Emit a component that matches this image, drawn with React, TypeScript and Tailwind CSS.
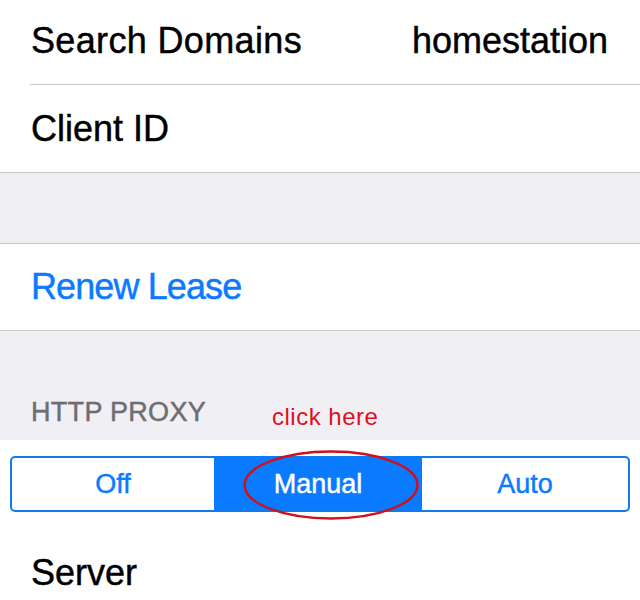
import React from "react";

export default function App() {
  const font = { fontFamily: '"Liberation Sans", Arial, sans-serif' };
  return (
    <div className="relative w-[640px] h-[600px] overflow-hidden bg-white [-webkit-text-stroke:0.45px]" style={font}>
      {/* Row 1 */}
      <div className="flex h-[84px] items-center justify-between pb-[3px] pl-[31px] pr-[32px] text-[36px] text-black">
        <span className="tracking-[0.35px]">Search Domains</span>
        <span>homestation</span>
      </div>
      <div className="ml-[30px] h-px bg-[#c8c7cc]" />
      {/* Row 2 */}
      <div className="flex h-[87px] items-center pl-[31px] text-[36px] text-black">
        <span>Client ID</span>
      </div>
      <div className="h-px bg-[#c8c7cc]" />
      <div className="h-[70px] bg-[#efeff4]" />
      <div className="h-px bg-[#c8c7cc]" />
      {/* Renew Lease */}
      <div className="flex h-[86px] items-center pl-[31px] text-[36px] text-[#0a7aff]">
        <span className="tracking-[-0.9px]">Renew Lease</span>
      </div>
      <div className="h-px bg-[#c8c7cc]" />
      {/* Section header */}
      <div className="flex h-[109px] items-end bg-[#efeff4] pb-[12px] pl-[31px]">
        <span className="text-[27px] leading-[32px] tracking-[0.3px] text-[#6d6d72]">HTTP PROXY</span>
      </div>
      {/* Segmented control */}
      <div className="pt-[16px] px-[10px]">
        <div className="grid h-[56px] grid-cols-[202px_208px_1fr] overflow-hidden rounded-[5px] border-2 border-[#1079ee] text-[27px]">
          <div className="flex items-center justify-center text-[#0a7aff]">Off</div>
          <div className="flex items-center justify-center bg-[#0a7aff] text-white">Manual</div>
          <div className="flex items-center justify-center text-[#0a7aff]">Auto</div>
        </div>
      </div>
      {/* Server */}
      <div className="mt-[17px] flex h-[87px] items-center pl-[31px] text-[36px] text-black">
        <span>Server</span>
      </div>

      {/* Annotation overlay */}
      <span className="absolute left-[272px] top-[402px] text-[24px] leading-[30px] tracking-[0.5px] text-[#e0101c] [-webkit-text-stroke:0px]">
        click here
      </span>
      <svg className="absolute left-0 top-0" width="640" height="600" viewBox="0 0 640 600">
        <ellipse cx="331" cy="485" rx="86.5" ry="33.5" fill="none" stroke="#d0101c" strokeWidth="2.5" />
      </svg>
    </div>
  );
}
